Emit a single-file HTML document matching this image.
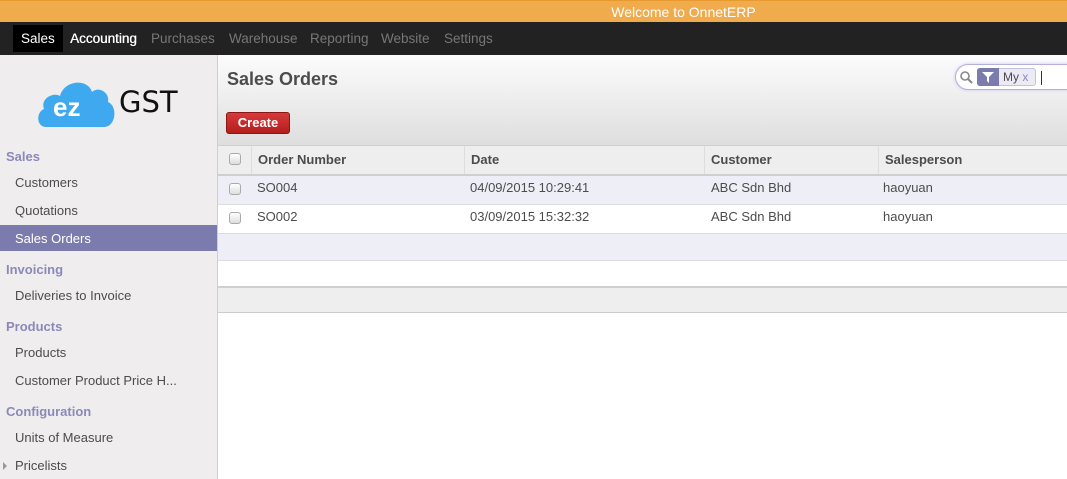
<!DOCTYPE html>
<html><head><style>
*{margin:0;padding:0;box-sizing:border-box}
body{width:1067px;height:479px;overflow:hidden;font-family:"Liberation Sans",Arial,sans-serif;font-size:13px;color:#4c4c4c;background:#fff;position:relative}
.top{position:absolute;left:0;top:0;width:1067px;height:22px;background:#f0ab4d;color:#fff;font-size:14px;text-align:center;line-height:22px;padding-left:300px;border-top:1px solid #e89a30}
.nav{position:absolute;left:0;top:22px;width:1067px;height:33px;background:#222;font-size:13.5px}
.nav span{position:absolute;top:0;line-height:33px;color:#777}
.nav .act{background:#000;color:#fff;left:13px;top:3px;height:27px;line-height:27px;padding:0 8px}
.side{position:absolute;left:0;top:55px;width:218px;height:424px;background:#efeded;border-right:1px solid #cfcfcf}
.side .h{position:absolute;left:6px;color:#8a89ba;font-weight:bold;font-size:13px}
.side .i{position:absolute;left:15px;color:#4c4c4c;font-size:13px}
.side .sel{position:absolute;left:0;top:170px;width:217px;height:26px;background:#7c7bad}
.hdr{position:absolute;left:218px;top:55px;width:849px;height:91px;background:linear-gradient(#fcfcfc,#dedede);border-bottom:1px solid #cfcfcf}
.cb{position:absolute;width:12px;height:12px;border:1px solid #aaa;border-radius:3px;background:linear-gradient(#fff,#ddd)}
.row{position:absolute;left:218px;width:849px}
.row span{position:absolute;top:0}
</style></head><body>
<div class="top">Welcome to OnnetERP</div>
<div class="nav">
<span class="act">Sales</span>
<span style="left:70px;color:#fff;text-shadow:0.4px 0 0 #fff">Accounting</span>
<span style="left:151px">Purchases</span>
<span style="left:229px">Warehouse</span>
<span style="left:310px">Reporting</span>
<span style="left:381px">Website</span>
<span style="left:444px">Settings</span>
</div>
<div class="side">
<svg style="position:absolute;left:36px;top:21px" width="80" height="52" viewBox="0 0 80 52"><path d="M10 51 C0 51 0 36 8 33 C4 22 18 16 24 20 C28 4 52 2 56 16 C62 10 74 16 72 26 C82 30 80 51 68 51 Z" fill="#3fa9f0"/><text x="17" y="40" font-family="Liberation Sans" font-weight="bold" font-size="26" fill="#fff">ez</text></svg>
<div style="position:absolute;left:119px;top:30px;font-size:29px;color:#111;font-family:'DejaVu Sans',sans-serif">GST</div>
<div class="sel"></div>
<div class="h" style="top:94px">Sales</div>
<div class="i" style="top:120px">Customers</div>
<div class="i" style="top:148px">Quotations</div>
<div class="i" style="top:176px;color:#fff">Sales Orders</div>
<div class="h" style="top:207px">Invoicing</div>
<div class="i" style="top:233px">Deliveries to Invoice</div>
<div class="h" style="top:264px">Products</div>
<div class="i" style="top:290px">Products</div>
<div class="i" style="top:318px">Customer Product Price H...</div>
<div class="h" style="top:349px">Configuration</div>
<div class="i" style="top:375px">Units of Measure</div>
<div style="position:absolute;left:3px;top:407px;width:0;height:0;border-left:4px solid #999;border-top:4px solid transparent;border-bottom:4px solid transparent"></div>
<div class="i" style="top:403px">Pricelists</div>
</div>
<div class="hdr">
<div style="position:absolute;left:9px;top:14px;font-size:18px;font-weight:bold;color:#4c4c4c">Sales Orders</div>
<div style="position:absolute;left:8px;top:57px;width:64px;height:22px;background:linear-gradient(#d63a3a,#b51e1e);border:1px solid #8c1414;border-radius:3px;color:#fff;font-size:13px;font-weight:bold;text-align:center;line-height:20px">Create</div>
<div style="position:absolute;left:737px;top:9px;width:120px;height:26px;background:#fff;border:1px solid #b3b0e0;border-radius:13px 0 0 13px;box-shadow:0 0 3px #c9c6ef">
<svg style="position:absolute;left:4px;top:6px" width="13" height="13" viewBox="0 0 13 13"><circle cx="5" cy="5" r="4" fill="none" stroke="#888" stroke-width="1.6"/><path d="M8 8 L12 12" stroke="#888" stroke-width="2"/></svg>
<div style="position:absolute;left:21px;top:3px;width:59px;height:18px;background:#eceaf5;border:1px solid #c4c2dc;border-radius:3px"></div>
<div style="position:absolute;left:21px;top:3px;width:22px;height:18px;background:#7c7bad;border-radius:3px 0 0 3px"><svg style="position:absolute;left:5px;top:4px" width="12" height="11" viewBox="0 0 12 11"><path d="M0 0 H12 L7 5 V11 L5 9 V5 Z" fill="#fff"/></svg></div>
<div style="position:absolute;left:47px;top:5px;font-size:12px;color:#4c4c4c">My <span style="color:#8a89ba">x</span></div>
<div style="position:absolute;left:85px;top:6px;width:1px;height:14px;background:#333"></div>
</div>
</div>
<div class="row" style="top:146px;height:30px;background:#eee;border-bottom:2px solid #cfcfcf;font-weight:bold">
<div style="position:absolute;left:33px;top:0;width:1px;height:28px;background:#ddd"></div>
<div style="position:absolute;left:246px;top:0;width:1px;height:28px;background:#ddd"></div>
<div style="position:absolute;left:486px;top:0;width:1px;height:28px;background:#ddd"></div>
<div style="position:absolute;left:660px;top:0;width:1px;height:28px;background:#ddd"></div>
<div class="cb" style="left:11px;top:7px"></div>
<span style="left:40px;top:6px">Order Number</span><span style="left:253px;top:6px">Date</span><span style="left:493px;top:6px">Customer</span><span style="left:667px;top:6px">Salesperson</span>
</div>
<div class="row" style="top:176px;height:29px;background:#eeeef7;border-bottom:1px solid #ddd">
<div class="cb" style="left:11px;top:7px"></div>
<span style="left:39px;top:4px">SO004</span><span style="left:252px;top:4px">04/09/2015 10:29:41</span><span style="left:493px;top:4px">ABC Sdn Bhd</span><span style="left:665px;top:4px">haoyuan</span>
</div>
<div class="row" style="top:205px;height:29px;background:#fff;border-bottom:1px solid #ddd">
<div class="cb" style="left:11px;top:7px"></div>
<span style="left:39px;top:4px">SO002</span><span style="left:252px;top:4px">03/09/2015 15:32:32</span><span style="left:493px;top:4px">ABC Sdn Bhd</span><span style="left:665px;top:4px">haoyuan</span>
</div>
<div class="row" style="top:234px;height:27px;background:#eeeef7;border-bottom:1px solid #ddd"></div>
<div class="row" style="top:261px;height:27px;background:#fff;border-bottom:2px solid #cfcfcf"></div>
<div class="row" style="top:288px;height:25px;background:#eee;border-bottom:1px solid #ccc"></div>
</body></html>
